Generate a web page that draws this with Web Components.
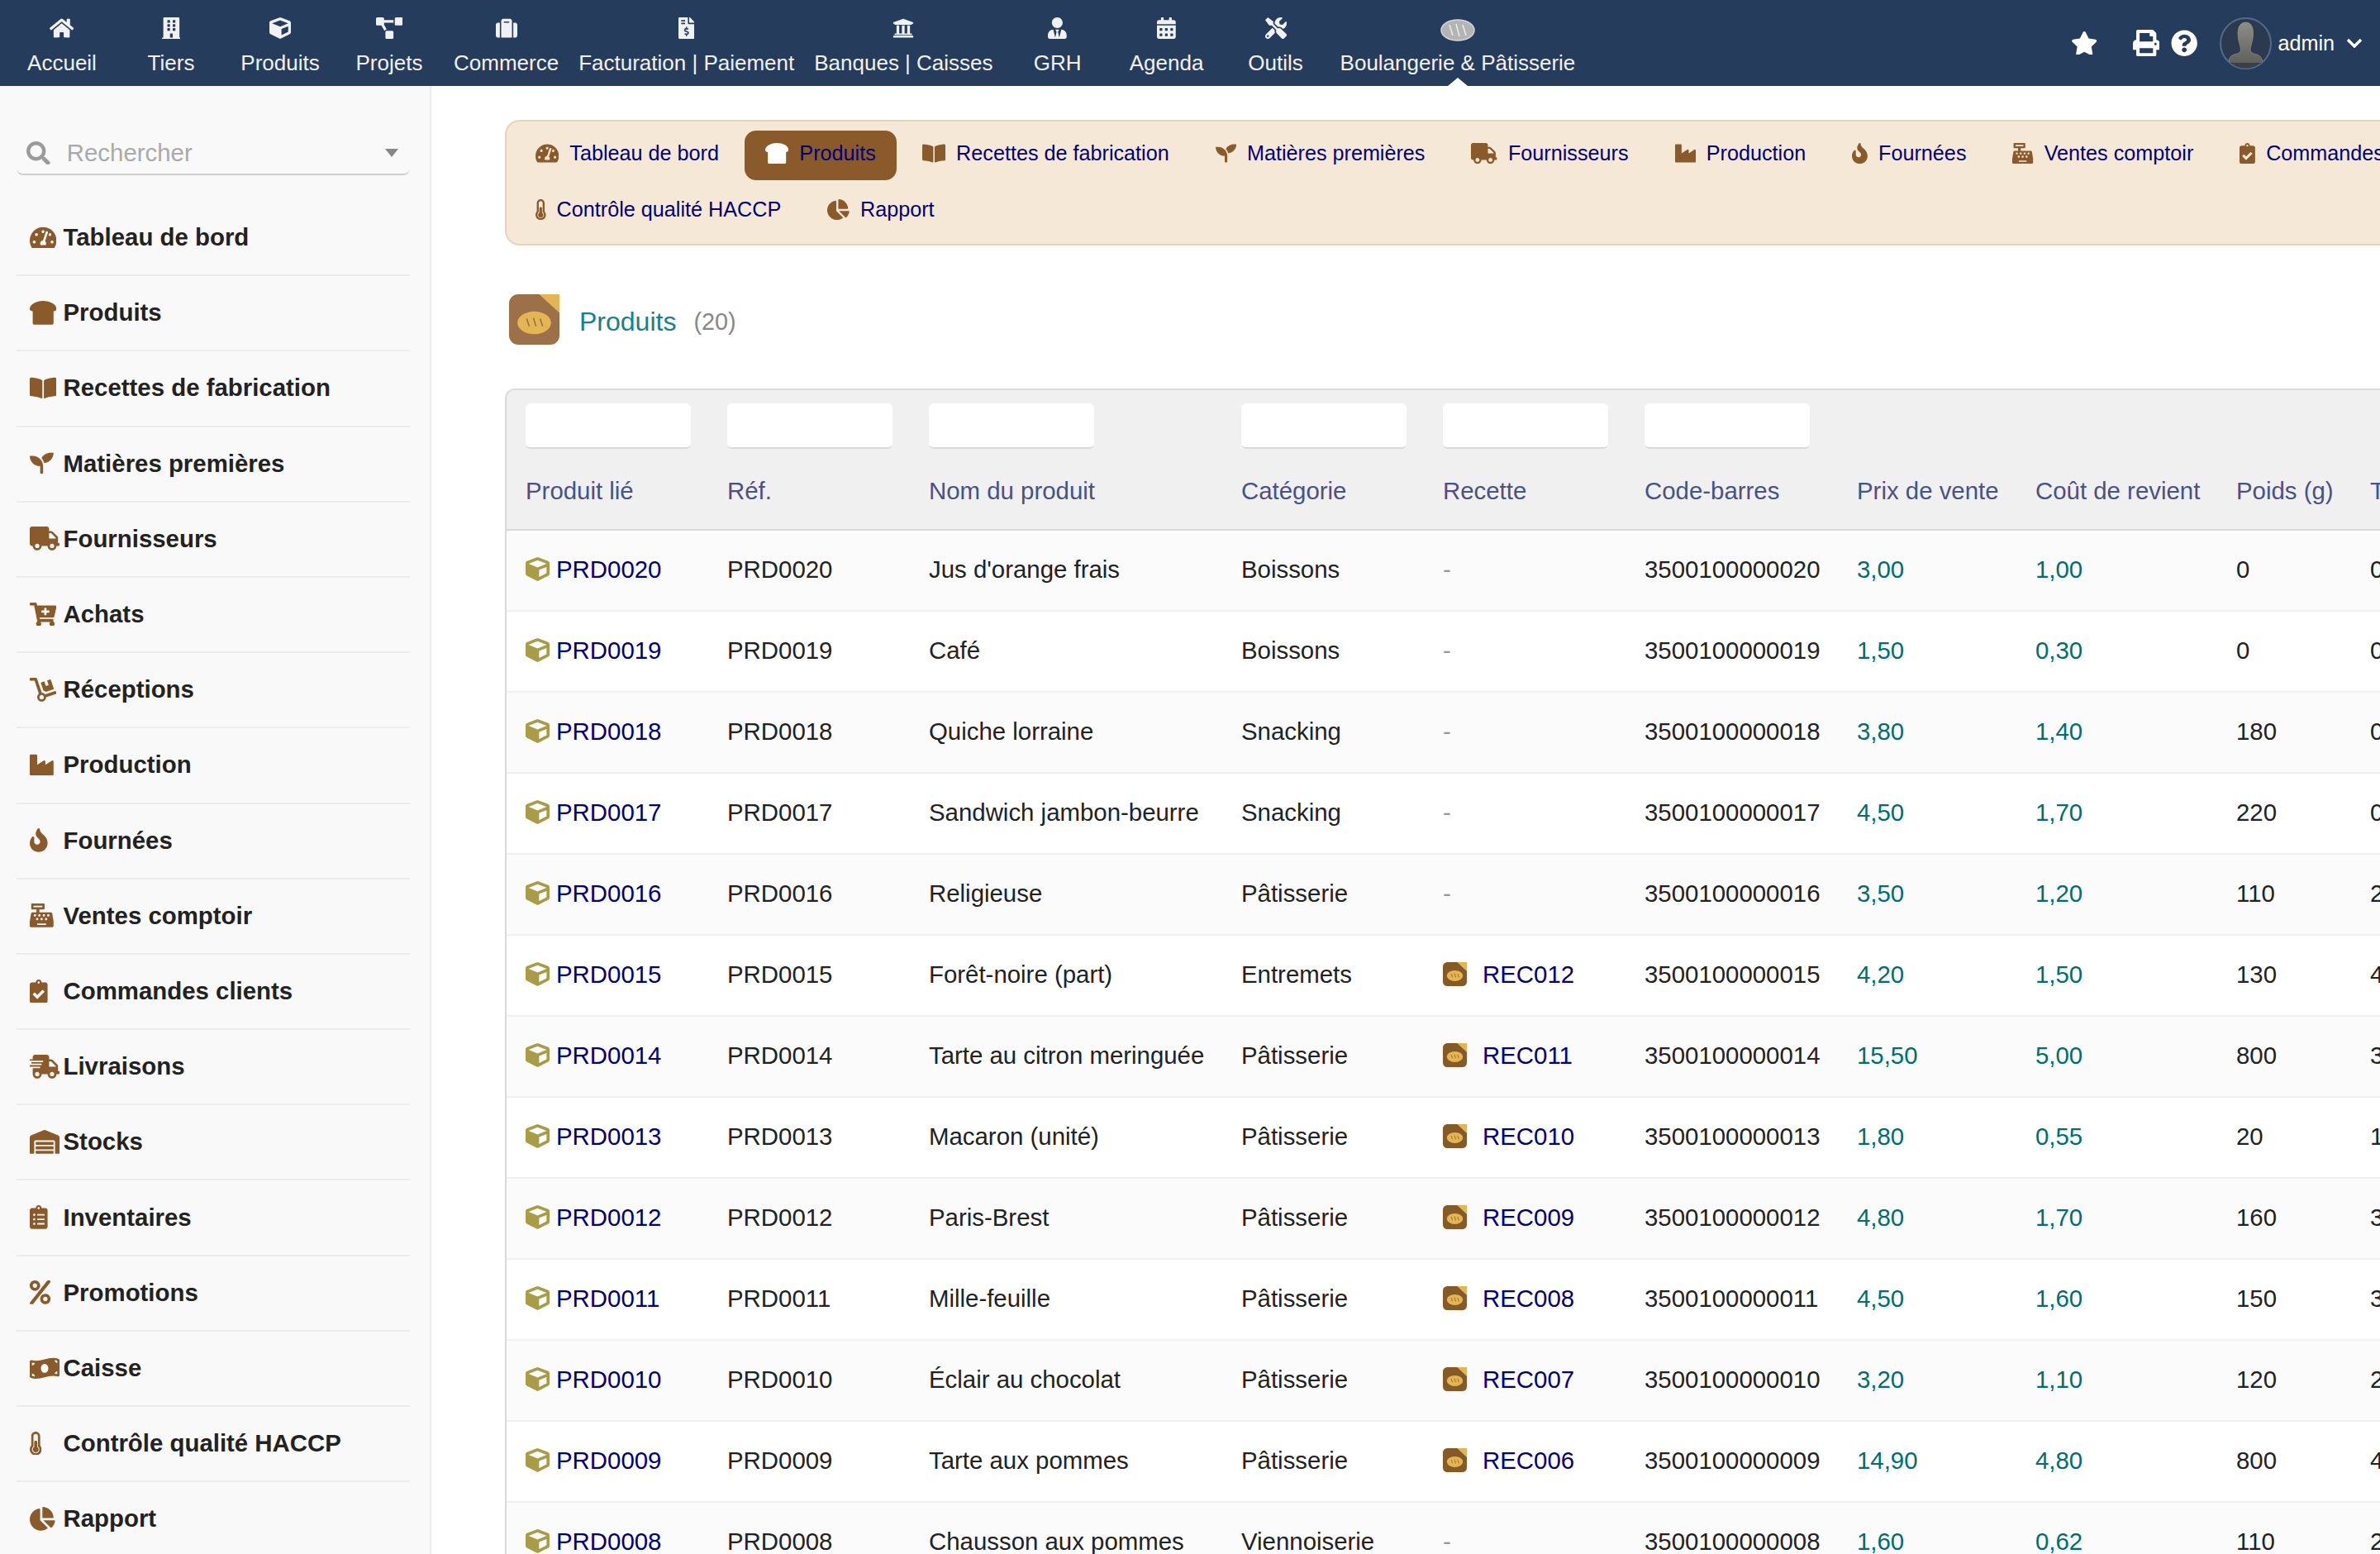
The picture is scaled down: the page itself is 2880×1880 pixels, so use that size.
<!DOCTYPE html>
<html lang="fr">
<head>
<meta charset="utf-8">
<title>Produits</title>
<style>
    html, body {
        margin: 0;
        width: 2880px;
        height: 1880px;
        overflow: hidden;
        background: #fff;
        font-family: "Liberation Sans", Arial, sans-serif;
        color: #222;
    }
</style>
</head>
<body>

<app-shell>
    <top-bar slot="top">
        <nav-item icon="home">Accueil</nav-item>
        <nav-item icon="building">Tiers</nav-item>
        <nav-item icon="cube">Produits</nav-item>
        <nav-item icon="diagram">Projets</nav-item>
        <nav-item icon="suitcase">Commerce</nav-item>
        <nav-item icon="invoice">Facturation | Paiement</nav-item>
        <nav-item icon="bank">Banques | Caisses</nav-item>
        <nav-item icon="usertie">GRH</nav-item>
        <nav-item icon="calendar">Agenda</nav-item>
        <nav-item icon="tools">Outils</nav-item>
        <nav-item logo active>Boulangerie &amp; Pâtisserie</nav-item>
    </top-bar>

    <side-menu slot="side">
        <menu-entry icon="gauge">Tableau de bord</menu-entry>
        <menu-entry icon="bread">Produits</menu-entry>
        <menu-entry icon="book">Recettes de fabrication</menu-entry>
        <menu-entry icon="seedling">Matières premières</menu-entry>
        <menu-entry icon="truck">Fournisseurs</menu-entry>
        <menu-entry icon="cart">Achats</menu-entry>
        <menu-entry icon="dolly">Réceptions</menu-entry>
        <menu-entry icon="industry">Production</menu-entry>
        <menu-entry icon="fire">Fournées</menu-entry>
        <menu-entry icon="register">Ventes comptoir</menu-entry>
        <menu-entry icon="clipcheck">Commandes clients</menu-entry>
        <menu-entry icon="shipping">Livraisons</menu-entry>
        <menu-entry icon="warehouse">Stocks</menu-entry>
        <menu-entry icon="cliplist">Inventaires</menu-entry>
        <menu-entry icon="percent">Promotions</menu-entry>
        <menu-entry icon="money">Caisse</menu-entry>
        <menu-entry icon="thermo">Contrôle qualité HACCP</menu-entry>
        <menu-entry icon="pie">Rapport</menu-entry>
    </side-menu>

    <sub-nav>
        <sub-item icon="gauge">Tableau de bord</sub-item>
        <sub-item icon="bread" active>Produits</sub-item>
        <sub-item icon="book">Recettes de fabrication</sub-item>
        <sub-item icon="seedling">Matières premières</sub-item>
        <sub-item icon="truck">Fournisseurs</sub-item>
        <sub-item icon="industry">Production</sub-item>
        <sub-item icon="fire">Fournées</sub-item>
        <sub-item icon="register">Ventes comptoir</sub-item>
        <sub-item icon="clipcheck">Commandes clients</sub-item>
        <sub-item icon="thermo">Contrôle qualité HACCP</sub-item>
        <sub-item icon="pie">Rapport</sub-item>
    </sub-nav>

    <page-title count="(20)">Produits</page-title>

    <product-table></product-table>
</app-shell>

<script>
const ICONS = {
    home: [576, "M280.37 148.26L96 300.11V464a16 16 0 0 0 16 16l112.06-.29a16 16 0 0 0 15.92-16V368a16 16 0 0 1 16-16h64a16 16 0 0 1 16 16v95.64a16 16 0 0 0 16 16.05L464 480a16 16 0 0 0 16-16V300L295.67 148.26a12.19 12.19 0 0 0-15.3 0zM571.6 251.47L488 182.56V44.05a12 12 0 0 0-12-12h-56a12 12 0 0 0-12 12v72.61L318.47 43a48 48 0 0 0-61 0L4.34 251.47a12 12 0 0 0-1.6 16.9l25.5 31A12 12 0 0 0 45.15 301l235.22-193.74a12.19 12.19 0 0 1 15.3 0L530.9 301a12 12 0 0 0 16.9-1.6l25.5-31a12 12 0 0 0-1.7-16.93z"],
    building: [448, "M436 480h-20V24c0-13.255-10.745-24-24-24H56C42.745 0 32 10.745 32 24v456H12c-6.627 0-12 5.373-12 12v20h448v-20c0-6.627-5.373-12-12-12zM128 76c0-6.627 5.373-12 12-12h40c6.627 0 12 5.373 12 12v40c0 6.627-5.373 12-12 12h-40c-6.627 0-12-5.373-12-12V76zm0 96c0-6.627 5.373-12 12-12h40c6.627 0 12 5.373 12 12v40c0 6.627-5.373 12-12 12h-40c-6.627 0-12-5.373-12-12v-40zm52 148h-40c-6.627 0-12-5.373-12-12v-40c0-6.627 5.373-12 12-12h40c6.627 0 12 5.373 12 12v40c0 6.627-5.373 12-12 12zm76 160h-64v-84c0-6.627 5.373-12 12-12h40c6.627 0 12 5.373 12 12v84zm64-172c0 6.627-5.373 12-12 12h-40c-6.627 0-12-5.373-12-12v-40c0-6.627 5.373-12 12-12h40c6.627 0 12 5.373 12 12v40zm0-96c0 6.627-5.373 12-12 12h-40c-6.627 0-12-5.373-12-12v-40c0-6.627 5.373-12 12-12h40c6.627 0 12 5.373 12 12v40zm0-96c0 6.627-5.373 12-12 12h-40c-6.627 0-12-5.373-12-12V76c0-6.627 5.373-12 12-12h40c6.627 0 12 5.373 12 12v40z"],
    cube: [512, "M239.1 6.3l-208 78c-18.7 7-31.1 25-31.1 45v225.1c0 18.2 10.3 34.8 26.5 42.9l208 104c13.5 6.8 29.4 6.8 42.9 0l208-104c16.3-8.1 26.5-24.8 26.5-42.9V129.3c0-20-12.4-37.9-31.1-44.9l-208-78C262 2.2 250 2.2 239.1 6.3zM256 68.4l192 72v1.1l-192 78-192-78v-1.1l192-72zm32 356V275.5l160-65v133.9l-160 80z"],
    diagram: [640, "M384 320H256c-17.67 0-32 14.33-32 32v128c0 17.67 14.33 32 32 32h128c17.67 0 32-14.33 32-32V352c0-17.67-14.33-32-32-32zM192 32c0-17.67-14.33-32-32-32H32C14.33 0 0 14.33 0 32v128c0 17.67 14.33 32 32 32h95.72l73.16 128.04C211.98 300.98 232.4 288 256 288h.28L192 175.51V128h224V64H192V32zM608 0H480c-17.67 0-32 14.33-32 32v128c0 17.67 14.33 32 32 32h128c17.67 0 32-14.33 32-32V32c0-17.67-14.33-32-32-32z"],
    suitcase: [512, "M128 480h256V80c0-26.5-21.5-48-48-48H176c-26.5 0-48 21.5-48 48v400zm64-384h128v32H192V96zm320 80v256c0 26.5-21.5 48-48 48h-48V128h48c26.5 0 48 21.5 48 48zM96 480H48c-26.5 0-48-21.5-48-48V176c0-26.5 21.5-48 48-48h48v352z"],
    invoice: [384, "M377 105L279.1 7c-4.5-4.5-10.6-7-17-7H256v128h128v-6.1c0-6.3-2.5-12.4-7-16.9zm-153 31V0H24C10.7 0 0 10.7 0 24v464c0 13.3 10.7 24 24 24h336c13.3 0 24-10.7 24-24V160H248c-13.2 0-24-10.8-24-24zM64 72c0-4.42 3.58-8 8-8h80c4.42 0 8 3.58 8 8v16c0 4.42-3.58 8-8 8H72c-4.42 0-8-3.58-8-8V72zm0 80v-16c0-4.42 3.58-8 8-8h80c4.42 0 8 3.58 8 8v16c0 4.42-3.58 8-8 8H72c-4.42 0-8-3.58-8-8zm144 263.88V440c0 4.42-3.58 8-8 8h-16c-4.42 0-8-3.58-8-8v-24.29c-11.29-.58-22.27-4.52-31.37-11.35-3.9-2.93-4.1-8.77-.57-12.14l11.75-11.21c2.77-2.64 6.89-2.76 10.13-.73 3.87 2.42 8.26 3.72 12.82 3.72h28.11c6.5 0 11.8-5.92 11.8-13.19 0-5.95-3.61-11.19-8.77-12.73l-45-13.5c-18.59-5.58-31.58-23.42-31.58-43.39 0-24.52 19.05-44.44 42.67-45.07V232c0-4.42 3.58-8 8-8h16c4.42 0 8 3.58 8 8v24.29c11.29.58 22.27 4.51 31.37 11.35 3.9 2.93 4.1 8.77.57 12.14l-11.75 11.21c-2.77 2.64-6.89 2.76-10.13.73-3.87-2.43-8.26-3.72-12.82-3.72h-28.11c-6.5 0-11.8 5.92-11.8 13.19 0 5.95 3.61 11.19 8.77 12.73l45 13.5c18.59 5.58 31.58 23.42 31.58 43.39 0 24.53-19.05 44.44-42.67 45.07z"],
    bank: [512, "M496 128v16a8 8 0 0 1-8 8h-24v12c0 6.627-5.373 12-12 12H60c-6.627 0-12-5.373-12-12v-12H24a8 8 0 0 1-8-8v-16a8 8 0 0 1 4.941-7.392l232-88a7.996 7.996 0 0 1 6.118 0l232 88A8 8 0 0 1 496 128zm-24 304H40c-13.255 0-24 10.745-24 24v16a8 8 0 0 0 8 8h464a8 8 0 0 0 8-8v-16c0-13.255-10.745-24-24-24zM96 192v192H60c-6.627 0-12 5.373-12 12v20h416v-20c0-6.627-5.373-12-12-12h-36V192h-64v192h-64V192h-64v192h-64V192H96z"],
    usertie: [448, "M224 256c70.7 0 128-57.3 128-128S294.7 0 224 0 96 57.3 96 128s57.3 128 128 128zm95.8 32.6L272 480l-32-136 32-56h-96l32 56-32 136-47.8-191.4C56.9 292 0 350.3 0 422.4V464c0 26.5 21.5 48 48 48h352c26.5 0 48-21.5 48-48v-41.6c0-72.1-56.9-130.4-128.2-133.8z"],
    calendar: [448, "M0 464c0 26.5 21.5 48 48 48h352c26.5 0 48-21.5 48-48V192H0v272zm320-196c0-6.6 5.4-12 12-12h40c6.6 0 12 5.4 12 12v40c0 6.6-5.4 12-12 12h-40c-6.6 0-12-5.4-12-12v-40zm0 128c0-6.6 5.4-12 12-12h40c6.6 0 12 5.4 12 12v40c0 6.6-5.4 12-12 12h-40c-6.6 0-12-5.4-12-12v-40zM192 268c0-6.6 5.4-12 12-12h40c6.6 0 12 5.4 12 12v40c0 6.6-5.4 12-12 12h-40c-6.6 0-12-5.4-12-12v-40zm0 128c0-6.6 5.4-12 12-12h40c6.6 0 12 5.4 12 12v40c0 6.6-5.4 12-12 12h-40c-6.6 0-12-5.4-12-12v-40zM64 268c0-6.6 5.4-12 12-12h40c6.6 0 12 5.4 12 12v40c0 6.6-5.4 12-12 12H76c-6.6 0-12-5.4-12-12v-40zm0 128c0-6.6 5.4-12 12-12h40c6.6 0 12 5.4 12 12v40c0 6.6-5.4 12-12 12H76c-6.6 0-12-5.4-12-12v-40zM400 64h-48V16c0-8.8-7.2-16-16-16h-32c-8.8 0-16 7.2-16 16v48H160V16c0-8.8-7.2-16-16-16h-32c-8.8 0-16 7.2-16 16v48H48C21.5 64 0 85.5 0 112v48h448v-48c0-26.5-21.5-48-48-48z"],
    tools: [512, "M501.1 395.7L384 278.6c-23.1-23.1-57.6-27.6-85.4-13.9L192 158.1V96L64 0 0 64l96 128h62.1l106.6 106.6c-13.6 27.8-9.2 62.3 13.9 85.4l117.1 117.1c14.6 14.6 38.2 14.6 52.7 0l52.7-52.7c14.5-14.6 14.5-38.2 0-52.7zM331.7 225c28.3 0 54.9 11 74.9 31l19.4 19.4c15.8-6.9 30.8-16.5 43.8-29.5 37.1-37.1 49.7-89.3 37.9-136.7-2.2-9-13.5-12.1-20.1-5.5l-74.4 74.4-67.9-11.3L334 98.9l74.4-74.4c6.6-6.6 3.4-17.9-5.7-20.2-47.4-11.7-99.6.9-136.6 37.9-28.5 28.5-41.9 66.1-41.2 103.6l82.1 82.1c8.1-1.9 16.5-2.9 24.7-2.9zm-103.9 82l-56.7-56.7L18.7 402.8c-25 25-25 65.5 0 90.5s65.5 25 90.5 0l123.6-123.6c-7.6-19.9-9.9-41.6-5-62.7zM64 472c-13.2 0-24-10.8-24-24 0-13.3 10.7-24 24-24s24 10.7 24 24c0 13.2-10.7 24-24 24z"],
    star: [576, "M259.3 17.8L194 150.2 47.9 171.5c-26.2 3.8-36.7 36.1-17.7 54.6l105.7 103-25 145.5c-4.5 26.3 23.2 46 46.4 33.7L288 439.6l130.7 68.7c23.2 12.2 50.9-7.4 46.4-33.7l-25-145.5 105.7-103c19-18.5 8.5-50.8-17.7-54.6L382 150.2 316.7 17.8c-11.7-23.6-45.6-23.9-57.4 0z"],
    print: [512, "M448 192V77.25c0-8.49-3.37-16.62-9.37-22.63L393.37 9.37c-6-6-14.14-9.37-22.63-9.37H96C78.33 0 64 14.33 64 32v160c-35.35 0-64 28.65-64 64v112c0 8.84 7.16 16 16 16h48v96c0 17.67 14.33 32 32 32h320c17.67 0 32-14.33 32-32v-96h48c8.84 0 16-7.16 16-16V256c0-35.35-28.65-64-64-64zm-64 256H128v-96h256v96zm0-224H128V64h192v48c0 8.84 7.16 16 16 16h48v96zm48 72c-13.25 0-24-10.75-24-24 0-13.26 10.75-24 24-24s24 10.74 24 24c0 13.25-10.75 24-24 24z"],
    help: [512, "M504 256c0 136.997-111.043 248-248 248S8 392.997 8 256C8 119.083 119.043 8 256 8s248 111.083 248 248zM262.655 90c-54.497 0-89.255 22.957-116.549 63.758-3.536 5.286-2.353 12.415 2.715 16.258l34.699 26.31c5.205 3.947 12.621 3.008 16.665-2.122 17.864-22.658 30.113-35.797 57.303-35.797 20.429 0 45.698 13.148 45.698 32.958 0 14.976-12.363 22.667-32.534 33.976C247.128 238.528 216 254.941 216 296v4c0 6.627 5.373 12 12 12h56c6.627 0 12-5.373 12-12v-1.333c0-28.462 83.186-29.647 83.186-106.667 0-58.002-60.165-102-116.531-102zM256 338c-25.365 0-46 20.635-46 46 0 25.364 20.635 46 46 46s46-20.636 46-46c0-25.365-20.635-46-46-46z"],
    search: [512, "M505 442.7L405.3 343c-4.5-4.5-10.6-7-17-7H372c27.6-35.3 44-79.7 44-128C416 93.1 322.9 0 208 0S0 93.1 0 208s93.1 208 208 208c48.3 0 92.7-16.4 128-44v16.3c0 6.4 2.5 12.5 7 17l99.7 99.7c9.4 9.4 24.6 9.4 33.9 0l28.3-28.3c9.4-9.4 9.4-24.6.1-34zM208 336c-70.7 0-128-57.2-128-128 0-70.7 57.2-128 128-128 70.7 0 128 57.2 128 128 0 70.7-57.2 128-128 128z"],
    gauge: [576, "M288 32C128.94 32 0 160.94 0 320c0 52.8 14.25 102.26 39.06 144.8 5.61 9.62 16.3 15.2 27.44 15.2h443c11.14 0 21.83-5.58 27.44-15.2C561.75 422.26 576 372.8 576 320c0-159.06-128.94-288-288-288zm0 64c14.71 0 26.58 10.13 30.32 23.65-1.11 2.26-2.64 4.23-3.45 6.67l-9.22 27.67c-5.13 3.49-10.97 6.01-17.64 6.01-17.67 0-32-14.33-32-32S270.33 96 288 96zM96 384c-17.67 0-32-14.33-32-32s14.33-32 32-32 32 14.33 32 32-14.33 32-32 32zm48-160c-17.67 0-32-14.33-32-32s14.33-32 32-32 32 14.33 32 32-14.33 32-32 32zm246.77-72.41l-61.33 184C343.13 347.33 352 364.54 352 384c0 11.72-3.38 22.55-8.88 32H232.88c-5.5-9.45-8.88-20.28-8.88-32 0-33.94 26.5-61.43 59.9-63.59l61.34-184.01c4.17-12.56 17.73-19.45 30.36-15.17 12.57 4.19 19.35 17.79 15.17 30.36zm14.66 57.2l15.52-46.55c3.47-1.29 7.13-2.23 11.05-2.23 17.67 0 32 14.33 32 32s-14.33 32-32 32c-11.38-.01-20.89-6.28-26.57-15.22zM480 384c-17.67 0-32-14.33-32-32s14.33-32 32-32 32 14.33 32 32-14.33 32-32 32z"],
    bread: [576, "M288 0C108 0 0 93.4 0 169.14 0 199.44 24.24 224 64 224v256c0 17.67 16.12 32 36 32h376c19.88 0 36-14.33 36-32V224c39.76 0 64-24.56 64-54.86C576 93.4 468 0 288 0z"],
    book: [576, "M542.22 32.05c-54.8 3.11-163.72 14.43-230.96 55.59-4.64 2.84-7.27 7.89-7.27 13.17v363.87c0 11.55 12.63 18.85 23.28 13.49 69.18-34.82 169.23-44.32 218.7-46.92 16.89-.89 30.02-14.43 30.02-30.66V62.75c.01-17.71-15.35-31.74-33.77-30.7zM264.73 87.64C197.5 46.48 88.58 35.17 33.78 32.05 15.36 31.01 0 45.04 0 62.75V400.6c0 16.24 13.13 29.78 30.02 30.66 49.49 2.6 149.59 12.11 218.77 46.95 10.62 5.35 23.21-1.94 23.21-13.46V100.63c0-5.29-2.62-10.14-7.27-12.99z"],
    seedling: [512, "M64 96H0c0 123.7 100.3 224 224 224v144c0 8.8 7.2 16 16 16h32c8.8 0 16-7.2 16-16V320C288 196.3 187.7 96 64 96zm384-64c-84.2 0-157.4 46.5-195.7 115.2 27.7 30.2 48.2 66.9 59 107.6C424 243.1 512 147.9 512 32h-64z"],
    truck: [640, "M624 352h-16V243.9c0-12.7-5.1-24.9-14.1-33.9L494 110.1c-9-9-21.2-14.1-33.9-14.1H416V48c0-26.5-21.5-48-48-48H48C21.5 0 0 21.5 0 48v320c0 26.5 21.5 48 48 48h16c0 53 43 96 96 96s96-43 96-96h128c0 53 43 96 96 96s96-43 96-96h48c8.8 0 16-7.2 16-16v-32c0-8.8-7.2-16-16-16zM160 464c-26.5 0-48-21.5-48-48s21.5-48 48-48 48 21.5 48 48-21.5 48-48 48zm320 0c-26.5 0-48-21.5-48-48s21.5-48 48-48 48 21.5 48 48-21.5 48-48 48zm80-208H416V144h44.1l99.9 99.9V256z"],
    cart: [576, "M504.717 320H211.572l6.545 32h268.418c15.401 0 26.816 14.301 23.403 29.319l-5.517 24.276C523.112 414.668 536 433.828 536 456c0 31.202-25.519 56.444-56.824 55.994-29.823-.429-54.35-24.631-55.155-54.447-.44-16.287 6.085-31.049 16.803-41.548H231.176C241.553 426.165 248 440.326 248 456c0 31.813-26.528 57.431-58.67 55.938-28.54-1.325-51.751-24.385-53.251-52.917-1.158-22.034 10.436-41.455 28.051-51.586L93.883 64H24C10.745 64 0 53.255 0 40V24C0 10.745 10.745 0 24 0h102.529c11.401 0 21.228 8.021 23.513 19.19L159.208 64H551.99c15.401 0 26.816 14.301 23.403 29.319l-47.273 208C525.637 312.246 515.923 320 504.717 320zM408 168h-48v-40c0-8.837-7.163-16-16-16h-16c-8.837 0-16 7.163-16 16v40h-48c-8.837 0-16 7.163-16 16v16c0 8.837 7.163 16 16 16h48v40c0 8.837 7.163 16 16 16h16c8.837 0 16-7.163 16-16v-40h48c8.837 0 16-7.163 16-16v-16c0-8.837-7.163-16-16-16z"],
    dolly: [576, "M294.2 277.7c18 5 34.7 13.4 49.5 24.7l161.5-53.8c8.4-2.8 12.9-11.9 10.1-20.2L454.9 47.2c-2.8-8.4-11.9-12.9-20.2-10.1l-61.1 20.4 33.1 99.4L346 177l-33.1-99.4-61.6 20.5c-8.4 2.8-12.9 11.9-10.1 20.2l53 159.4zm281 48.7L565 296c-2.8-8.4-11.9-12.9-20.2-10.1l-213.5 71.2c-17.2-22-43.6-36.4-73.5-37L158.4 21.9C154 8.8 141.8 0 128 0H16C7.2 0 0 7.2 0 16v32c0 8.8 7.2 16 16 16h88.9l92.2 276.7c-26.1 20.4-41.7 53.6-36 90.5 6.1 39.4 37.9 72.3 77.3 79.2 60.2 10.7 112.3-34.8 113.4-92.6l213.3-71.2c8.3-2.8 12.8-11.9 10.1-20.2zM256 464c-26.5 0-48-21.5-48-48s21.5-48 48-48 48 21.5 48 48-21.5 48-48 48z"],
    industry: [512, "M475.115 163.781L336 252.309v-68.28c0-18.916-20.931-30.399-36.885-20.248L160 252.309V56c0-13.255-10.745-24-24-24H24C10.745 32 0 42.745 0 56v400c0 13.255 10.745 24 24 24h464c13.255 0 24-10.745 24-24V184.029c0-18.917-20.931-30.399-36.885-20.248z"],
    fire: [384, "M216 23.86c0-23.8-30.65-32.77-44.15-13.04C48 191.85 224 200 224 288c0 35.63-29.11 64.46-64.85 63.99-35.17-.45-63.15-29.77-63.15-64.94v-85.51c0-21.7-26.47-32.23-41.43-16.5C27.8 213.16 0 261.33 0 320c0 105.87 86.13 192 192 192s192-86.13 192-192c0-170.29-168-193-168-296.14z"],
    register: [512, "M511.1 378.8l-26.7-160c-2.6-15.4-15.9-26.7-31.6-26.7H208v-64h96c8.8 0 16-7.2 16-16V16c0-8.8-7.2-16-16-16H48c-8.8 0-16 7.2-16 16v96c0 8.8 7.2 16 16 16h96v64H59.1c-15.6 0-29 11.3-31.6 26.7L.8 378.7c-.6 3.5-.9 7-.9 10.5V480c0 17.7 14.3 32 32 32h448c17.7 0 32-14.3 32-32v-90.7c.1-3.5-.2-7-.8-10.5zM280 248c0-8.8 7.2-16 16-16h16c8.8 0 16 7.2 16 16v16c0 8.8-7.2 16-16 16h-16c-8.8 0-16-7.2-16-16v-16zm-32 64h16c8.8 0 16 7.2 16 16v16c0 8.8-7.2 16-16 16h-16c-8.8 0-16-7.2-16-16v-16c0-8.8 7.2-16 16-16zm-32-80c8.8 0 16 7.2 16 16v16c0 8.8-7.2 16-16 16h-16c-8.8 0-16-7.2-16-16v-16c0-8.8 7.2-16 16-16h16zM80 80V48h192v32H80zm40 200h-16c-8.8 0-16-7.2-16-16v-16c0-8.8 7.2-16 16-16h16c8.8 0 16 7.2 16 16v16c0 8.8-7.2 16-16 16zm16 64v-16c0-8.8 7.2-16 16-16h16c8.8 0 16 7.2 16 16v16c0 8.8-7.2 16-16 16h-16c-8.8 0-16-7.2-16-16zm216 112c0 4.4-3.6 8-8 8H168c-4.4 0-8-3.6-8-8v-16c0-4.4 3.6-8 8-8h176c4.4 0 8 3.6 8 8v16zm24-112c0 8.8-7.2 16-16 16h-16c-8.8 0-16-7.2-16-16v-16c0-8.8 7.2-16 16-16h16c8.8 0 16 7.2 16 16v16zm48-80c0 8.8-7.2 16-16 16h-16c-8.8 0-16-7.2-16-16v-16c0-8.8 7.2-16 16-16h16c8.8 0 16 7.2 16 16v16z"],
    clipcheck: [384, "M336 64h-80c0-35.3-28.7-64-64-64s-64 28.7-64 64H48C21.5 64 0 85.5 0 112v352c0 26.5 21.5 48 48 48h288c26.5 0 48-21.5 48-48V112c0-26.5-21.5-48-48-48zM192 40c13.3 0 24 10.7 24 24s-10.7 24-24 24-24-10.7-24-24 10.7-24 24-24zm121.2 231.8l-143 141.8c-4.7 4.7-12.3 4.6-17-.1l-82.6-83.3c-4.7-4.7-4.6-12.3.1-17L99.1 285c4.7-4.7 12.3-4.6 17 .1l46 46.4 106-105.2c4.7-4.7 12.3-4.6 17 .1l28.2 28.4c4.7 4.8 4.6 12.3-.1 17z"],
    shipping: [640, "M624 352h-16V243.9c0-12.7-5.1-24.9-14.1-33.9L494 110.1c-9-9-21.2-14.1-33.9-14.1H416V48c0-26.5-21.5-48-48-48H112C85.5 0 64 21.5 64 48v48H8c-4.4 0-8 3.6-8 8v16c0 4.4 3.6 8 8 8h272c4.4 0 8 3.6 8 8v16c0 4.4-3.6 8-8 8H40c-4.4 0-8 3.6-8 8v16c0 4.4 3.6 8 8 8h208c4.4 0 8 3.6 8 8v16c0 4.4-3.6 8-8 8H8c-4.4 0-8 3.6-8 8v16c0 4.4 3.6 8 8 8h208c4.4 0 8 3.6 8 8v16c0 4.4-3.6 8-8 8H64v128c0 53 43 96 96 96s96-43 96-96h128c0 53 43 96 96 96s96-43 96-96h48c8.8 0 16-7.2 16-16v-32c0-8.8-7.2-16-16-16zM160 464c-26.5 0-48-21.5-48-48s21.5-48 48-48 48 21.5 48 48-21.5 48-48 48zm320 0c-26.5 0-48-21.5-48-48s21.5-48 48-48 48 21.5 48 48-21.5 48-48 48zm80-208H416V144h44.1l99.9 99.9V256z"],
    warehouse: [640, "M504 352H136.4c-4.4 0-8 3.6-8 8l-.1 48c0 4.4 3.6 8 8 8H504c4.4 0 8-3.6 8-8v-48c0-4.4-3.6-8-8-8zm0 96H136.1c-4.4 0-8 3.6-8 8l-.1 48c0 4.4 3.6 8 8 8h368c4.4 0 8-3.6 8-8v-48c0-4.4-3.6-8-8-8zm0-192H136.6c-4.4 0-8 3.6-8 8l-.1 48c0 4.4 3.6 8 8 8H504c4.4 0 8-3.6 8-8v-48c0-4.4-3.6-8-8-8zm106.5-139L338.4 3.7a48.15 48.15 0 0 0-36.9 0L29.5 117C11.7 124.5 0 141.9 0 161.3V504c0 4.4 3.6 8 8 8h80c4.4 0 8-3.6 8-8V256c0-17.6 14.6-32 32.6-32h382.8c18 0 32.6 14.4 32.6 32v248c0 4.4 3.6 8 8 8h80c4.4 0 8-3.6 8-8V161.3c0-19.4-11.7-36.8-29.5-44.3z"],
    cliplist: [384, "M336 64h-80c0-35.3-28.7-64-64-64s-64 28.7-64 64H48C21.5 64 0 85.5 0 112v352c0 26.5 21.5 48 48 48h288c26.5 0 48-21.5 48-48V112c0-26.5-21.5-48-48-48zM96 424c-13.3 0-24-10.7-24-24s10.7-24 24-24 24 10.7 24 24-10.7 24-24 24zm0-96c-13.3 0-24-10.7-24-24s10.7-24 24-24 24 10.7 24 24-10.7 24-24 24zm0-96c-13.3 0-24-10.7-24-24s10.7-24 24-24 24 10.7 24 24-10.7 24-24 24zm96-192c13.3 0 24 10.7 24 24s-10.7 24-24 24-24-10.7-24-24 10.7-24 24-24zm128 368c0 4.4-3.6 8-8 8H168c-4.4 0-8-3.6-8-8v-16c0-4.4 3.6-8 8-8h144c4.4 0 8 3.6 8 8v16zm0-96c0 4.4-3.6 8-8 8H168c-4.4 0-8-3.6-8-8v-16c0-4.4 3.6-8 8-8h144c4.4 0 8 3.6 8 8v16zm0-96c0 4.4-3.6 8-8 8H168c-4.4 0-8-3.6-8-8v-16c0-4.4 3.6-8 8-8h144c4.4 0 8 3.6 8 8v16z"],
    percent: [448, "M112 224c61.9 0 112-50.1 112-112S173.9 0 112 0 0 50.1 0 112s50.1 112 112 112zm0-160c26.5 0 48 21.5 48 48s-21.5 48-48 48-48-21.5-48-48 21.5-48 48-48zm224 224c-61.9 0-112 50.1-112 112s50.1 112 112 112 112-50.1 112-112-50.1-112-112-112zm0 160c-26.5 0-48-21.5-48-48s21.5-48 48-48 48 21.5 48 48-21.5 48-48 48zM392.3.2l31.6.1c19.4.1 30.8 21.8 19.7 37.8L77.4 501.6a23.95 23.95 0 0 1-19.6 10.2l-33.4-.1c-19.5 0-30.9-21.9-19.7-37.8l368-463.7C377.2 4 384.5.2 392.3.2z"],
    money: [640, "M621.16 54.46C582.37 38.19 543.55 32 504.75 32c-123.17-.01-246.33 62.34-369.5 62.34-30.89 0-61.76-3.92-92.65-13.72-3.47-1.1-6.95-1.62-10.35-1.62C15.04 79 0 92.32 0 110.81v317.26c0 12.63 7.23 24.6 18.84 29.46C57.63 473.81 96.45 480 135.25 480c123.17 0 246.34-62.35 369.51-62.35 30.89 0 61.76 3.92 92.65 13.72 3.47 1.1 6.95 1.62 10.35 1.62 17.21 0 32.25-13.32 32.25-31.81V83.93c-.01-12.64-7.24-24.6-18.85-29.47zM48 132.22c20.12 5.04 41.12 7.57 62.72 8.93C104.84 170.54 79 192.69 48 192.69v-60.47zm0 285v-47.78c34.37 0 62.18 27.27 63.71 61.4-22.53-1.81-43.59-6.31-63.71-13.62zM320 352c-44.19 0-80-42.99-80-96 0-53.02 35.82-96 80-96s80 42.98 80 96c0 53.03-35.83 96-80 96zm272 27.78c-17.52-4.39-35.71-6.85-54.32-8.44 5.87-26.08 27.5-45.88 54.32-49.28v57.72zm0-236.11c-30.89-3.91-54.86-29.7-55.81-61.55 19.54 2.17 38.09 6.23 55.81 12.66v48.89z"],
    thermo: [256, "M192 384c0 35.346-28.654 64-64 64s-64-28.654-64-64c0-23.685 12.876-44.349 32-55.417V224c0-17.673 14.327-32 32-32s32 14.327 32 32v104.583c19.124 11.068 32 31.732 32 55.417zm32-84.653c19.912 22.563 32 52.194 32 84.653 0 70.696-57.303 128-128 128-.299 0-.609-.001-.909-.003C56.789 511.509-.357 453.636.002 383.333.166 351.135 12.225 321.755 32 299.347V96c0-53.019 42.981-96 96-96s96 42.981 96 96v203.347zM208 384c0-34.339-19.37-52.19-32-66.502V96c0-26.467-21.533-48-48-48S80 69.533 80 96v221.498c-12.732 14.428-31.825 32.1-31.999 66.08-.224 43.876 35.563 80.116 79.423 80.42L128 464c44.112 0 80-35.888 80-80z"],
    pie: [544, "M527.79 288H290.5l158.03 158.03c6.04 6.04 15.98 6.53 22.19.68 38.7-36.46 65.32-85.61 73.13-140.86 1.34-9.46-6.51-17.85-16.06-17.85zm-15.83-64.8C503.72 103.74 408.26 8.28 288.8.04 279.68-.59 272 7.1 272 16.24V240h223.77c9.14 0 16.82-7.68 16.19-16.8zM224 288V50.71c0-9.55-8.39-17.4-17.84-16.06C86.99 51.49-4.1 155.6.14 280.37 4.5 408.51 114.83 513.59 243.03 511.98c50.4-.63 96.97-16.87 135.26-44.03 7.9-5.6 8.42-17.23 1.57-24.08L224 288z"]
};

class FaIcon extends HTMLElement {
    connectedCallback() {
        const [w, d] = ICONS[this.getAttribute("name")];
        this.attachShadow({ mode: "open" }).innerHTML = `
            <style>
                :host { display: block; flex: none; height: 1em; width: ${w / 512}em; }
                svg { display: block; width: 100%; height: 100%; fill: currentColor; }
            </style>
            <svg viewBox="0 0 ${w} 512"><path d="${d}"/></svg>`;
    }
}
customElements.define("fa-icon", FaIcon);

// bread-on-a-tile picto used for the module title and the recipe links
class BakeryIcon extends HTMLElement {
    connectedCallback() {
        const size = this.getAttribute("size") ?? 60;
        const body = this.getAttribute("body") ?? "#9c7049";
        this.attachShadow({ mode: "open" }).innerHTML = `
            <style>
                :host { display: block; flex: none; width: ${size}px; height: ${size}px; }
                svg { display: block; width: 100%; height: 100%; }
            </style>
            <svg viewBox="0 0 60 60">
                <path d="M36 0H60V22z" fill="#e4b653"/>
                <path d="M11 0H36L60 22V49a11 11 0 0 1-11 11H11A11 11 0 0 1 0 49V11A11 11 0 0 1 11 0z" fill="${body}"/>
                <ellipse cx="30" cy="34" rx="20" ry="13.5" fill="#e4b653"/>
                <path d="M21 29l3 9M29 28l3 10M37 29l3 9" stroke="${body}" stroke-width="1.6" fill="none"/>
            </svg>`;
    }
}
customElements.define("bakery-icon", BakeryIcon);

class AppShell extends HTMLElement {
    constructor() {
        super();
        this.attachShadow({ mode: "open" }).innerHTML = `
            <style>
                :host { display: block; width: 2880px; height: 1880px; overflow: hidden; }
                .body { display: flex; height: 1776px; }
                main { flex: 1; min-width: 0; padding-left: 89px; padding-top: 41px; overflow: hidden; }
            </style>
            <slot name="top"></slot>
            <div class="body">
                <slot name="side"></slot>
                <main><slot></slot></main>
            </div>`;
    }
}
customElements.define("app-shell", AppShell);

class TopBar extends HTMLElement {
    constructor() {
        super();
        this.attachShadow({ mode: "open" }).innerHTML = `
            <style>
                :host {
                    display: flex;
                    height: 104px;
                    padding-left: 9px;
                    background: #263c5c;
                    color: #f0f1f3;
                    font-size: 26px;
                }
                .menu { display: flex; }
                .tools { display: flex; align-items: center; margin-left: auto; padding-right: 21px; color: #fff; font-size: 25.2px; }
                .star { font-size: 28.8px; margin-right: 42px; }
                .print { font-size: 32.4px; margin-right: 14px; }
                .help { font-size: 32.4px; margin-right: 27px; }
                .avatar { width: 63px; height: 63px; flex: none; margin-right: 7px; }
                .admin { margin-right: 14px; }
                .chev { width: 20px; height: 12px; flex: none; }
            </style>
            <div class="menu"><slot></slot></div>
            <div class="tools">
                <fa-icon class="star" name="star"></fa-icon>
                <fa-icon class="print" name="print"></fa-icon>
                <fa-icon class="help" name="help"></fa-icon>
                <svg class="avatar" viewBox="0 0 63 63">
                    <defs>
                        <clipPath id="round"><circle cx="31.5" cy="31.5" r="30"/></clipPath>
                        <linearGradient id="head" x1="0" y1="0" x2="0" y2="1">
                            <stop offset="0" stop-color="#8e8e88"/>
                            <stop offset="1" stop-color="#5d5f58"/>
                        </linearGradient>
                    </defs>
                    <circle cx="31.5" cy="31.5" r="30.5" fill="#2b3a4f" stroke="#526a8c" stroke-width="2"/>
                    <g clip-path="url(#round)">
                        <path d="M31.5 6c6 0 9 5 9 13 0 9-3 15-3.500 20 .5 4 4 5 8 6 5 1.500 6.500 5 6.500 9v3H11v-3c0-4 1.500-7.500 6.500-9 4-1 7.500-2 8-6-.5-5-3.500-11-3.500-20 0-8 3.500-13 9.500-13z" fill="url(#head)" stroke="#a09c8c" stroke-width=".6"/>
                        <rect x="0" y="55" width="63" height="8" fill="#3b3e44"/>
                    </g>
                </svg>
                <span class="admin">admin</span>
                <svg class="chev" viewBox="0 0 20 12"><path d="M2 2l8 8 8-8" fill="none" stroke="#fff" stroke-width="3.400"/></svg>
            </div>`;
    }
}
customElements.define("top-bar", TopBar);

class NavItem extends HTMLElement {
    constructor() {
        super();
        const icon = this.hasAttribute("logo")
            ? `<svg class="logo" viewBox="0 0 42 27">
                   <ellipse cx="21" cy="13.500" rx="20" ry="12.500" fill="#b4b4b4" stroke="#d8d8d8" stroke-width="1.500"/>
                   <path d="M11 7l4 13M19 6l4 15M27 7l4 13" stroke="#ececec" stroke-width="1.500" fill="none"/>
               </svg>`
            : `<fa-icon name="${this.getAttribute("icon")}"></fa-icon>`;
        this.attachShadow({ mode: "open" }).innerHTML = `
            <style>
                :host {
                    display: flex;
                    flex-direction: column;
                    align-items: center;
                    position: relative;
                    min-width: 132px;
                    box-sizing: border-box;
                    padding: 21px 12px 0;
                    white-space: nowrap;
                }
                .ic { height: 26px; display: flex; align-items: center; }
                .logo { width: 42px; height: 27px; display: block; margin-top: 5px; }
                .txt { margin-top: 14px; line-height: 30px; }
                :host([active])::after {
                    content: "";
                    position: absolute;
                    bottom: 0;
                    left: 50%;
                    margin-left: -12px;
                    border-left: 12px solid transparent;
                    border-right: 12px solid transparent;
                    border-bottom: 10px solid #fff;
                }
            </style>
            <div class="ic">${icon}</div>
            <div class="txt"><slot></slot></div>`;
    }
}
customElements.define("nav-item", NavItem);

class SideMenu extends HTMLElement {
    constructor() {
        super();
        this.attachShadow({ mode: "open" }).innerHTML = `
            <style>
                :host {
                    display: block;
                    flex: none;
                    width: 520px;
                    height: 1776px;
                    overflow: hidden;
                    background: #f9f9f9;
                    border-right: 2px solid #ececec;
                }
                .search {
                    display: flex;
                    align-items: center;
                    box-sizing: border-box;
                    margin: 0 24px 31px 20px;
                    padding: 56px 14px 0 12px;
                    height: 108px;
                    border-bottom: 2px solid #cfcfcf;
                    border-radius: 0 0 8px 8px;
                    color: #aaa;
                    font-size: 29.4px;
                }
                fa-icon { color: #9b9b9b; font-size: 28.8px; margin-right: 20px; }
                .arrow {
                    margin-left: auto;
                    border-left: 8px solid transparent;
                    border-right: 8px solid transparent;
                    border-top: 10px solid #888;
                }
            </style>
            <div class="search">
                <fa-icon name="search"></fa-icon>
                <span>Rechercher</span>
                <span class="arrow"></span>
            </div>
            <slot></slot>`;
    }
}
customElements.define("side-menu", SideMenu);

class MenuEntry extends HTMLElement {
    constructor() {
        super();
        this.attachShadow({ mode: "open" }).innerHTML = `
            <style>
                :host {
                    display: flex;
                    align-items: center;
                    box-sizing: border-box;
                    height: 91.2px;
                    margin: 0 24px 0 20px;
                    padding: 0 0 1px 16px;
                    border-bottom: 2px solid #ececec;
                    font-size: 29.4px;
                    font-weight: bold;
                    color: #222;
                    white-space: nowrap;
                }
                .ic { flex: none; width: 40.5px; color: #8b5a2b; font-size: 28.8px; }
            </style>
            <div class="ic"><fa-icon name="${this.getAttribute("icon")}"></fa-icon></div>
            <slot></slot>`;
    }
}
customElements.define("menu-entry", MenuEntry);

class SubNav extends HTMLElement {
    constructor() {
        super();
        this.attachShadow({ mode: "open" }).innerHTML = `
            <style>
                :host {
                    display: flex;
                    flex-wrap: wrap;
                    gap: 8px 6px;
                    box-sizing: border-box;
                    width: 2440px;
                    padding: 11px 10px 9px;
                    background: #f5e8d7;
                    border: 2px solid #e7d3b8;
                    border-radius: 18px;
                    font-size: 25.2px;
                }
            </style>
            <slot></slot>`;
    }
}
customElements.define("sub-nav", SubNav);

class SubItem extends HTMLElement {
    constructor() {
        super();
        this.attachShadow({ mode: "open" }).innerHTML = `
            <style>
                :host {
                    display: flex;
                    align-items: center;
                    gap: 13px;
                    box-sizing: border-box;
                    height: 60px;
                    padding: 0 25px 5px;
                    border-radius: 14px;
                    color: #000078;
                    white-space: nowrap;
                }
                fa-icon { color: #8b5a2b; }
                :host([active]) { background: #8b5a2b; }
                :host([active]) fa-icon { color: #fff; }
            </style>
            <fa-icon name="${this.getAttribute("icon")}"></fa-icon>
            <slot></slot>`;
    }
}
customElements.define("sub-item", SubItem);

class PageTitle extends HTMLElement {
    constructor() {
        super();
        this.attachShadow({ mode: "open" }).innerHTML = `
            <style>
                :host {
                    display: flex;
                    align-items: center;
                    height: 60px;
                    margin: 59px 0 54px 5px;
                    font-size: 32px;
                    color: #12838a;
                }
                bakery-icon { margin-right: 24px; }
                .txt { margin-top: 6px; }
                .count { margin-left: 21px; margin-top: 6px; font-size: 28.8px; color: #888; }
            </style>
            <bakery-icon size="61"></bakery-icon>
            <span class="txt"><slot></slot></span>
            <span class="count">${this.getAttribute("count")}</span>`;
    }
}
customElements.define("page-title", PageTitle);

const PRODUCTS = [
    ["PRD0020", "Jus d'orange frais", "Boissons", "", "3500100000020", "3,00", "1,00", "0", "0"],
    ["PRD0019", "Café", "Boissons", "", "3500100000019", "1,50", "0,30", "0", "0"],
    ["PRD0018", "Quiche lorraine", "Snacking", "", "3500100000018", "3,80", "1,40", "180", "0"],
    ["PRD0017", "Sandwich jambon-beurre", "Snacking", "", "3500100000017", "4,50", "1,70", "220", "0"],
    ["PRD0016", "Religieuse", "Pâtisserie", "", "3500100000016", "3,50", "1,20", "110", "2"],
    ["PRD0015", "Forêt-noire (part)", "Entremets", "REC012", "3500100000015", "4,20", "1,50", "130", "4"],
    ["PRD0014", "Tarte au citron meringuée", "Pâtisserie", "REC011", "3500100000014", "15,50", "5,00", "800", "3"],
    ["PRD0013", "Macaron (unité)", "Pâtisserie", "REC010", "3500100000013", "1,80", "0,55", "20", "1"],
    ["PRD0012", "Paris-Brest", "Pâtisserie", "REC009", "3500100000012", "4,80", "1,70", "160", "3"],
    ["PRD0011", "Mille-feuille", "Pâtisserie", "REC008", "3500100000011", "4,50", "1,60", "150", "3"],
    ["PRD0010", "Éclair au chocolat", "Pâtisserie", "REC007", "3500100000010", "3,20", "1,10", "120", "2"],
    ["PRD0009", "Tarte aux pommes", "Pâtisserie", "REC006", "3500100000009", "14,90", "4,80", "800", "4"],
    ["PRD0008", "Chausson aux pommes", "Viennoiserie", "", "3500100000008", "1,60", "0,62", "110", "2"]
];

const COLUMNS = ["Produit lié", "Réf.", "Nom du produit", "Catégorie", "Recette", "Code-barres", "Prix de vente", "Coût de revient", "Poids (g)", "T"];
const COL_WIDTHS = [244, 244, 378, 244, 244, 257, 216, 243, 162, 200];
const FILTERS = 6;

class ProductTable extends HTMLElement {
    constructor() {
        super();
        this.attachShadow({ mode: "open" });
    }

    connectedCallback() {
        const cols = COL_WIDTHS.map(w => `<col style="width:${w}px">`).join("");
        const filters = COLUMNS.map((c, i) =>
            `<td class="f">${i < FILTERS ? '<div class="input"></div>' : ""}</td>`).join("");
        const titles = COLUMNS.map(c => `<th>${c}</th>`).join("");

        const rows = PRODUCTS.map(p => `
            <tr>
                <td><span class="ref"><fa-icon class="box" name="cube"></fa-icon><a>${p[0]}</a></span></td>
                <td>${p[0]}</td>
                <td>${p[1]}</td>
                <td>${p[2]}</td>
                <td>${p[3]
                    ? `<span class="ref"><bakery-icon size="29" body="#865a27"></bakery-icon><a class="rec">${p[3]}</a></span>`
                    : '<span class="none">-</span>'}</td>
                <td>${p[4]}</td>
                <td class="amount">${p[5]}</td>
                <td class="amount">${p[6]}</td>
                <td>${p[7]}</td>
                <td>${p[8]}</td>
            </tr>`).join("");

        this.shadowRoot.innerHTML = `
            <style>
                :host {
                    display: block;
                    width: 2400px;
                    box-sizing: border-box;
                    border: solid #d9d9d9;
                    border-width: 2px 0 0 2px;
                    border-top-left-radius: 12px;
                    overflow: hidden;
                    font-size: 29.4px;
                }
                table { border-collapse: separate; border-spacing: 0; table-layout: fixed; width: ${COL_WIDTHS.reduce((a, b) => a + b)}px; }
                td, th { padding: 0 0 3px 23px; white-space: nowrap; overflow: hidden; text-align: left; font-weight: normal; }
                thead tr { background: #f0f0f0; }
                .top { height: 76px; }
                .f { padding: 16px 0 0 23px; vertical-align: top; }
                .input {
                    width: 200px;
                    height: 55px;
                    box-sizing: border-box;
                    background: #fff;
                    border-bottom: 2px solid #d9d9d9;
                    border-radius: 6px;
                }
                th { height: 94px; box-sizing: border-box; padding-bottom: 0; color: #4a5088; border-bottom: 2px solid #d9d9d9; }
                tbody td { height: 98px; box-sizing: border-box; border-bottom: 2px solid #f0f0f0; color: #222; }
                tbody tr:nth-child(odd) { background: #fbfbfb; }
                tbody tr:nth-child(even) { background: #fff; }
                .ref { display: flex; align-items: center; }
                .box { font-size: 29px; color: #a99c46; margin-right: 8px; }
                bakery-icon { margin-right: 19px; }
                a { color: #000078; }
                .amount { color: #006e6e; }
                .none { color: #999; }
            </style>
            <table>
                <colgroup>${cols}</colgroup>
                <thead>
                    <tr class="top">${filters}</tr>
                    <tr>${titles}</tr>
                </thead>
                <tbody>${rows}</tbody>
            </table>`;
    }
}
customElements.define("product-table", ProductTable);
</script>
</body>
</html>
